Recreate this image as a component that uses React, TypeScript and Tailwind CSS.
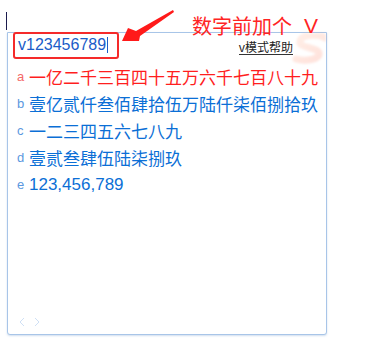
import React from 'react';

const rows = [
  { key: 'a', text: '一亿二千三百四十五万六千七百八十九', active: true },
  { key: 'b', text: '壹亿贰仟叁佰肆拾伍万陆仟柒佰捌拾玖' },
  { key: 'c', text: '一二三四五六七八九' },
  { key: 'd', text: '壹贰叁肆伍陆柒捌玖' },
  { key: 'e', text: '123,456,789', digits: true },
];

const cjk = { fontFamily: '"Microsoft YaHei", "Noto Sans CJK SC", "Liberation Sans", sans-serif' };
const latin = { fontFamily: '"Liberation Sans", Arial, sans-serif' };

const App = () => {
  return (
    <div className="relative w-[376px] h-[357px] bg-white overflow-hidden">
      {/* caret of the editor behind the ime */}
      <div className="absolute left-[6px] top-[12px] w-px h-[18px] bg-[#1b1b4d]"></div>

      <div className="ml-[7px] mt-[32px] w-[320px] h-[303px] flex flex-col border border-[#a8c5e8] rounded-b-[3px] shadow-[0_1px_2px_rgba(120,160,210,0.35)] bg-white relative">
        {/* sogou watermark */}
        <svg className="absolute right-0 top-0 opacity-20 blur-[1px]" width="34" height="32" viewBox="0 0 34 32">
          <defs>
            <linearGradient id="sg" x1="0" y1="0" x2="1" y2="1">
              <stop offset="0" stopColor="#ffb08a" />
              <stop offset="1" stopColor="#ff6a4a" />
            </linearGradient>
          </defs>
          <path d="M34 5 C24 0 8 2 8 9 C7 15 25 14 27 20 C28 26 14 29 4 26" fill="none" stroke="url(#sg)" strokeWidth="7" strokeLinecap="round" />
        </svg>

        <div className="h-[24px] flex items-center justify-between pl-[10px] pr-[33px]">
          <div className="flex items-center text-[16px] leading-none text-[#1a5cc8]" style={latin}>
            v123456789
            <span className="ml-[1px] w-px h-[16px] bg-[#1a5cc8]"></span>
          </div>
          <span className="text-[12px] leading-[14px] text-[#222] border-b border-[#333] mt-[4px]" style={cjk}>
            v模式帮助
          </span>
        </div>

        <div className="pt-[6px] flex flex-col">
          {rows.map((r) => (
            <div key={r.key} className="h-[27px] flex items-center pl-[9px]">
              <span
                className={`w-[11px] text-[13px] leading-none ${r.active ? 'text-[#f46a6a]' : 'text-[#5b98e0]'}`}
                style={latin}
              >
                {r.key}
              </span>
              <span
                className={`ml-[1px] text-[17px] leading-none whitespace-nowrap ${r.active ? 'text-[#ff1e1e]' : 'text-[#0b6fd6]'}`}
                style={r.digits ? latin : cjk}
              >
                {r.text}
              </span>
            </div>
          ))}
        </div>

        <div className="mt-auto flex items-center gap-[9px] pl-[11px] pb-[7px]">
          <svg width="6" height="10" viewBox="0 0 6 10">
            <path d="M5 1 L1 5 L5 9" fill="none" stroke="#cfe0f5" strokeWidth="1" />
          </svg>
          <svg width="6" height="10" viewBox="0 0 6 10">
            <path d="M1 1 L5 5 L1 9" fill="none" stroke="#cfe0f5" strokeWidth="1" />
          </svg>
        </div>
      </div>

      {/* annotation drawn over the screenshot */}
      <div className="absolute left-[13px] top-[32px] w-[106px] h-[27px] border-2 border-[#f52a2a] rounded-[3px]"></div>
      <svg className="absolute left-0 top-0" width="376" height="60" viewBox="0 0 376 60">
        <polygon points="173,10 136,31 128,28 122,41 139,41 140,36 174,12" fill="#ff1a1a" />
      </svg>
      <div className="absolute left-[192px] top-[16px] flex items-center text-[20px] leading-[20px] text-[#ff2424] whitespace-nowrap" style={cjk}>
        <span>数字前加个</span>
        <span className="ml-[12px] text-[21px]" style={latin}>V</span>
      </div>
    </div>
  );
};

export default App;
